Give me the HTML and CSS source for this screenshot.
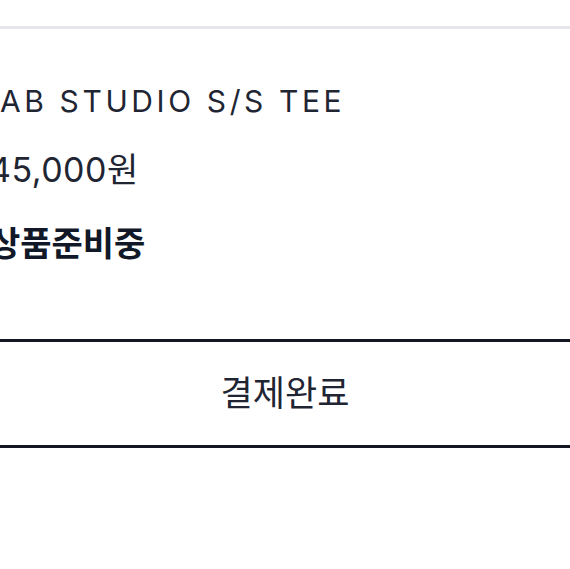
FILE: index.html
```html
<!DOCTYPE html>
<html lang="ko">
<head>
    <meta charset="UTF-8">
    <meta name="viewport" content="width=device-width, initial-scale=1.0">
    <title>주문 상세</title>
    <link rel="stylesheet" href="styles.css">
</head>
<body>
    <div class="order">
        <div class="item">
            <p class="item-name">AB STUDIO S/S TEE</p>
            <p class="item-price">45,000원</p>
            <p class="item-status">상품준비중</p>
        </div>
        <button class="status-button">결제완료</button>
    </div>
</body>
</html>
```

FILE: styles.css
```css
body {
    margin: 0;
    background-color: #fff;
    font-family: 'Inter', 'Noto Sans CJK KR', sans-serif;
    color: #1f2533;
}
.order {
    margin-top: 26px;
    border-top: 3px solid #e5e7eb;
}
.item {
    padding: 52px 0 75px;
    margin-left: -11px;
}
.item p {
    margin: 0;
}
.item-name {
    padding-left: 11px;
    font-size: 30px;
    letter-spacing: 3.6px;
    line-height: 40px;
}
.item-price {
    margin-top: 29px !important;
    font-size: 34px;
    letter-spacing: 0.5px;
    line-height: 40px;
}
.item-status {
    margin-top: 34px !important;
    font-size: 34px;
    font-weight: 700;
    color: #111827;
    line-height: 40px;
}
.status-button {
    display: block;
    width: 100%;
    height: 109px;
    padding: 0 0 6px;
    background: #fff;
    border: none;
    border-top: 3px solid #131722;
    border-bottom: 3px solid #131722;
    font-family: 'Inter', 'Noto Sans CJK KR', sans-serif;
    font-size: 35px;
    color: #1f2533;
}
```
